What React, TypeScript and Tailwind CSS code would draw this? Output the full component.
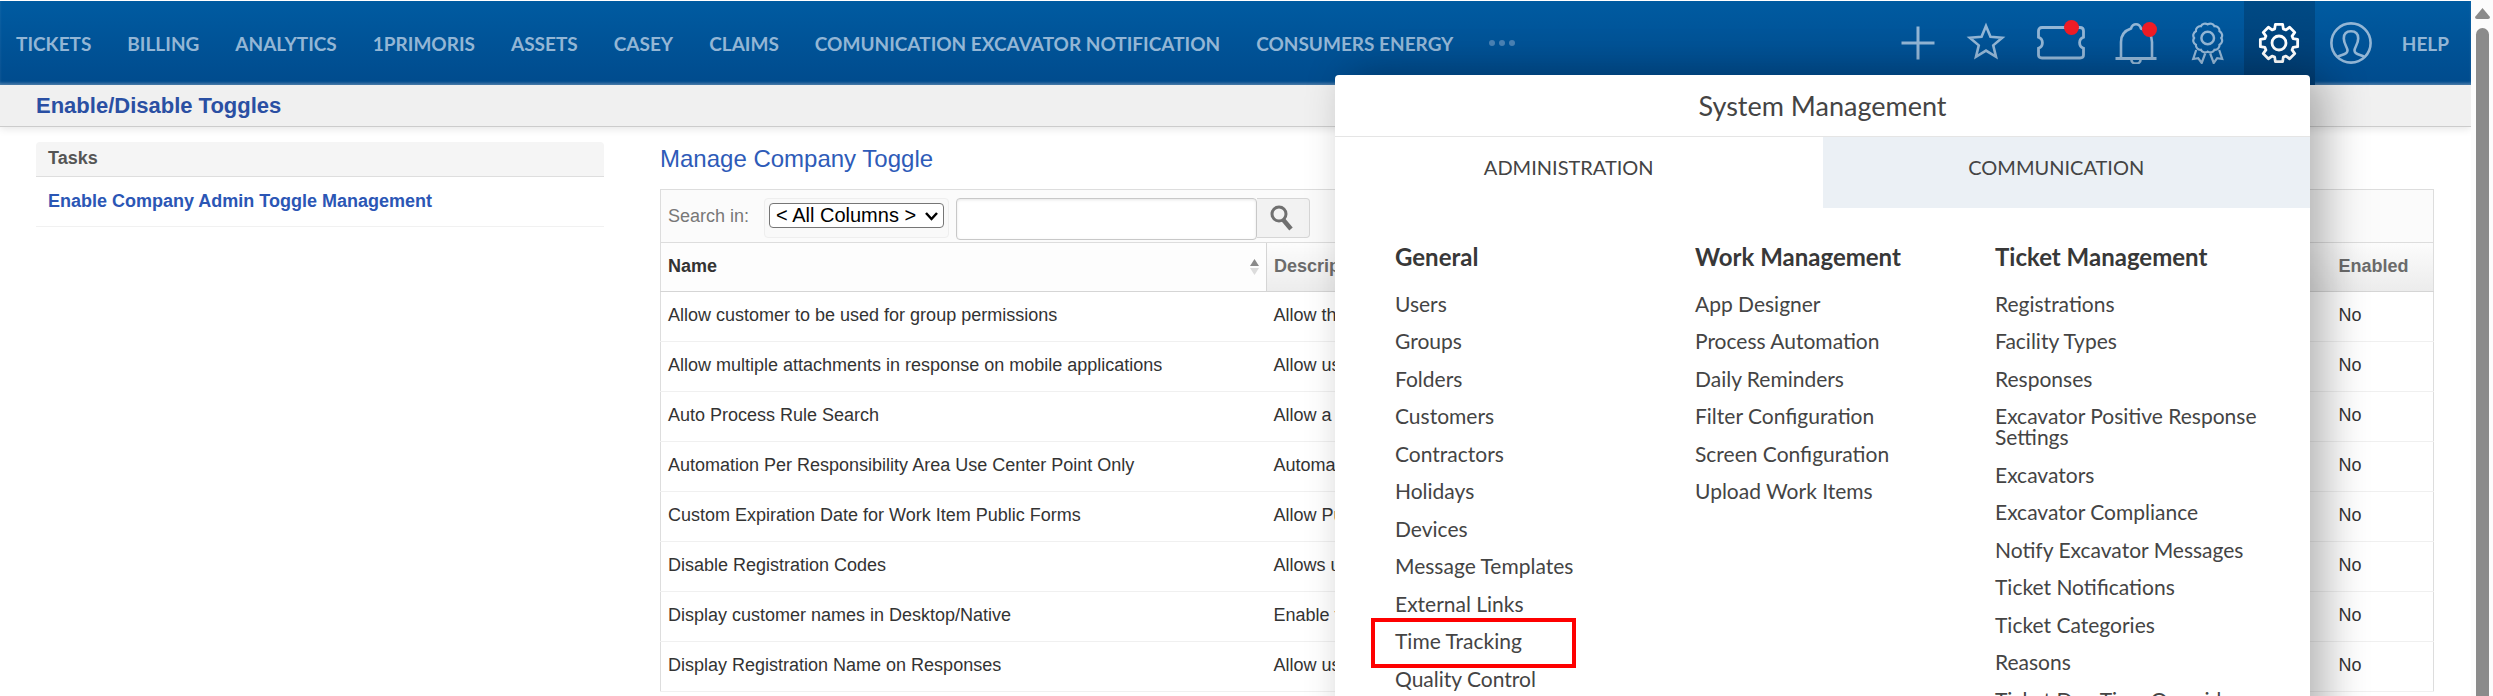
import { useState } from "react";

const navItems = [
  "TICKETS",
  "BILLING",
  "ANALYTICS",
  "1PRIMORIS",
  "ASSETS",
  "CASEY",
  "CLAIMS",
  "COMUNICATION EXCAVATOR NOTIFICATION",
  "CONSUMERS ENERGY",
];

const toggles = [
  { name: "Allow customer to be used for group permissions", description: "Allow the customer", enabled: false },
  { name: "Allow multiple attachments in response on mobile applications", description: "Allow users", enabled: false },
  { name: "Auto Process Rule Search", description: "Allow a rule", enabled: false },
  { name: "Automation Per Responsibility Area Use Center Point Only", description: "Automation", enabled: false },
  { name: "Custom Expiration Date for Work Item Public Forms", description: "Allow Public", enabled: false },
  { name: "Disable Registration Codes", description: "Allows users", enabled: false },
  { name: "Display customer names in Desktop/Native", description: "Enable the", enabled: false },
  { name: "Display Registration Name on Responses", description: "Allow users", enabled: false },
];

const menuColumns = [
  {
    title: "General",
    items: [
      "Users",
      "Groups",
      "Folders",
      "Customers",
      "Contractors",
      "Holidays",
      "Devices",
      "Message Templates",
      "External Links",
      "Time Tracking",
      "Quality Control",
    ],
  },
  {
    title: "Work Management",
    items: [
      "App Designer",
      "Process Automation",
      "Daily Reminders",
      "Filter Configuration",
      "Screen Configuration",
      "Upload Work Items",
    ],
  },
  {
    title: "Ticket Management",
    items: [
      "Registrations",
      "Facility Types",
      "Responses",
      "Excavator Positive Response Settings",
      "Excavators",
      "Excavator Compliance",
      "Notify Excavator Messages",
      "Ticket Notifications",
      "Ticket Categories",
      "Reasons",
      "Ticket Due Time Override",
    ],
  },
];

const HIGHLIGHTED_ITEM = "Time Tracking";

const polar = (c: number, r: number, deg: number) => {
  const a = ((deg - 90) * Math.PI) / 180;
  return `${(c + r * Math.cos(a)).toFixed(2)} ${(c + r * Math.sin(a)).toFixed(2)}`;
};

const starPath =
  "M" +
  Array.from({ length: 10 }, (_, i) => polar(21, i % 2 ? 7.6 : 17, i * 36)).join("L") +
  "Z";

const gearPath =
  "M" +
  Array.from({ length: 8 }, (_, i) => i * 45)
    .map((d) =>
      [
        polar(21, 14.8, d - 17),
        polar(21, 19, d - 11),
        polar(21, 19, d + 11),
        polar(21, 14.8, d + 17),
      ].join("L")
    )
    .join("L") +
  "Z";

const badgePath =
  `M${polar(16, 13.6, 0)}` +
  Array.from({ length: 12 }, (_, i) => `A4.6 4.6 0 0 1 ${polar(16, 13.6, (i + 1) * 30)}`).join("") +
  "Z";

function PlusIcon() {
  return (
    <svg width="34" height="34" viewBox="0 0 34 34" fill="none" stroke="currentColor" strokeWidth="3">
      <path d="M17 0.5V33.5M0.5 17H33.5" />
    </svg>
  );
}

function StarIcon() {
  return (
    <svg width="42" height="42" viewBox="0 0 42 42" fill="none" stroke="currentColor" strokeWidth="2.6" strokeMiterlimit="10">
      <path d={starPath} />
    </svg>
  );
}

function TicketIcon() {
  return (
    <svg width="48" height="34" viewBox="0 0 48 34" fill="none" stroke="currentColor" strokeWidth="2.8">
      <path d="M5 1.5H43Q46.5 1.5 46.5 5V11.2A5.9 5.9 0 0 0 46.5 22.3V29Q46.5 32 43 32H5Q1.5 32 1.5 29V22.3A5.9 5.9 0 0 0 1.5 11.2V5Q1.5 1.5 5 1.5Z" />
    </svg>
  );
}

function BellIcon() {
  return (
    <svg width="42" height="42" viewBox="0 0 42 42" fill="none" stroke="currentColor" strokeWidth="2.6">
      <path d="M6 35.5V20C6 13 10 8.5 16 6.5C17 3.5 19 2.3 21 2.3S25 3.5 26 6.5C32 8.5 37 13 37 20V35.5" />
      <path d="M0.5 36.5H41.5" strokeWidth="3" />
      <path d="M16.5 38A4.5 3.6 0 0 0 25.5 38" />
    </svg>
  );
}

function BadgeIcon() {
  return (
    <svg width="34" height="42" viewBox="-0.7 0 34 42" fill="none" stroke="currentColor" strokeWidth="2.2">
      <path d={badgePath} />
      <circle cx="16" cy="16" r="6.3" strokeWidth="2.5" />
      <path d="M4.5 28L1.5 37L6.5 36.2L10 41L13.5 31.5M27.5 28L30.5 37L25.5 36.2L22 41L18.5 31.5" />
    </svg>
  );
}

function GearIcon() {
  return (
    <svg width="42" height="42" viewBox="0 0 42 42" fill="none" stroke="currentColor" strokeWidth="2.8" strokeLinejoin="round">
      <path d={gearPath} />
      <circle cx="21" cy="21" r="7" />
    </svg>
  );
}

function UserIcon() {
  return (
    <svg width="42" height="42" viewBox="0 0 42 42" fill="none" stroke="currentColor" strokeWidth="2.6">
      <circle cx="21" cy="21" r="19.6" />
      <path d="M7.5 35C11 32.5 17.5 33 17.5 28.5C17.5 25.5 13.8 22 13.8 16.5C13.8 12 16.5 9.3 21 9.3S28.2 12 28.2 16.5C28.2 22 24.5 25.5 24.5 28.5C24.5 33 31 32.5 34.5 35" />
    </svg>
  );
}

function TopBar() {
  return (
    <header className="flex h-[84px] items-center bg-gradient-to-b from-[#005ba1] to-[#004b8d] shadow-[inset_0_-3px_3px_-1px_rgba(255,255,255,0.3)] font-['Lato',sans-serif] text-[#93b6d5]">
      <nav className="flex items-center gap-9 pl-4 text-[19px] font-bold whitespace-nowrap">
        {navItems.map((item) => (
          <a key={item} href="#">
            {item}
          </a>
        ))}
        <button type="button" aria-label="More" className="flex gap-1 text-[#4a82b4]">
          <span className="size-[6px] rounded-full bg-current" />
          <span className="size-[6px] rounded-full bg-current" />
          <span className="size-[6px] rounded-full bg-current" />
        </button>
      </nav>
      <div className="ml-auto flex h-full items-center pr-[22px]">
        <button type="button" aria-label="Add" className="mr-[30px]">
          <PlusIcon />
        </button>
        <button type="button" aria-label="Favorites" className="mr-[30px]">
          <StarIcon />
        </button>
        <button type="button" aria-label="Tickets" className="relative mr-[30px]">
          <TicketIcon />
          <span className="absolute -top-[6px] right-[6px] size-[15px] rounded-full bg-[#ee1c25]" />
        </button>
        <button type="button" aria-label="Alerts" className="relative mr-[34px]">
          <BellIcon />
          <span className="absolute top-0 right-0 size-[15px] rounded-full bg-[#ee1c25]" />
        </button>
        <button type="button" aria-label="Awards" className="mr-[19px]">
          <BadgeIcon />
        </button>
        <button
          type="button"
          aria-label="Settings"
          className="mr-[15px] flex h-full w-[71px] items-center justify-center bg-gradient-to-b from-[#004a85] to-[#003d74] text-white"
        >
          <GearIcon />
        </button>
        <button type="button" aria-label="Profile" className="mr-[30px]">
          <UserIcon />
        </button>
        <a href="#" className="text-[19px] font-bold">
          HELP
        </a>
      </div>
    </header>
  );
}

function SystemMenu() {
  const [tab, setTab] = useState("ADMINISTRATION");

  return (
    <section className="absolute top-[75px] right-[161px] z-10 h-full w-[975px] rounded bg-white font-['Lato',sans-serif] text-[#444] shadow-[15px_0_44px_rgba(0,0,0,0.3)]">
      <h2 className="border-b border-[#e5e5e5] py-4 text-center text-[27px] leading-[29px]">
        System Management
      </h2>
      <div className="grid grid-cols-2">
        {["ADMINISTRATION", "COMMUNICATION"].map((name) => (
          <button
            key={name}
            type="button"
            onClick={() => setTab(name)}
            className={`h-[71px] pr-5 pb-[10px] text-[20px] ${
              tab === name ? "bg-white" : "bg-[#ebf0f5]"
            }`}
          >
            {name}
          </button>
        ))}
      </div>
      <div className="grid grid-cols-[300px_300px_275px] px-[60px] pt-9">
        {menuColumns.map((column) => (
          <div key={column.title}>
            <h3 className="mb-[23px] text-[24px] leading-[26px] font-bold text-[#383838]">{column.title}</h3>
            <ul className="text-[21px] leading-[21px]">
              {column.items.map((item) => (
                <li key={item} className="relative odd:pb-4 even:pb-[17px]">
                  <a href="#">{item}</a>
                  {item === HIGHLIGHTED_ITEM && (
                    <span className="absolute -top-3 -left-6 h-[50px] w-[205px] border-4 border-[#fe0000]" />
                  )}
                </li>
              ))}
            </ul>
          </div>
        ))}
      </div>
    </section>
  );
}

function TaskList() {
  return (
    <aside className="w-[568px] shrink-0 pt-[15px]">
      <h2 className="rounded-t border-b border-[#dedede] bg-[#f5f5f5] px-3 pt-1 pb-[5px] leading-[25px] font-bold text-[#555]">
        Tasks
      </h2>
      <a
        href="#"
        className="block border-b border-[#f1f1f1] px-3 py-3 leading-[25px] font-bold text-[#2b56b5]"
      >
        Enable Company Admin Toggle Management
      </a>
    </aside>
  );
}

function SearchBar() {
  return (
    <form className="flex h-[54px] items-start border border-[#ddd] bg-[#fbfbfb] px-[7px] pt-2">
      <label htmlFor="column" className="pt-[6px] text-[#777]">
        Search in:
      </label>
      <div className="ml-[15px] h-10 w-[185px] rounded-sm border border-[#eee] bg-[#f9f9f9] pt-1 pl-1">
        <div className="relative w-[175px]">
          <select
            id="column"
            className="w-full appearance-none rounded border border-[#767676] bg-white px-[6px] text-[20px] leading-[23px] text-black"
          >
            <option>&lt; All Columns &gt;</option>
          </select>
          <svg
            width="13"
            height="9"
            viewBox="0 0 13 9"
            fill="none"
            stroke="#000"
            strokeWidth="2.5"
            className="pointer-events-none absolute top-[9px] right-[6px]"
          >
            <path d="M1 1L6.5 7L12 1" />
          </svg>
        </div>
      </div>
      <input
        type="text"
        aria-label="Search text"
        className="ml-[7px] h-[42px] w-[301px] rounded-sm border border-[#c8c8c8] bg-white px-2 shadow-[inset_0_1px_3px_rgba(0,0,0,0.1)]"
      />
      <button
        type="button"
        aria-label="Search"
        className="flex h-10 w-[53px] items-center justify-center rounded-r border border-l-0 border-[#d6d6d6] bg-[#f2f2f2] text-[#707070]"
      >
        <svg width="26" height="28" viewBox="0 0 26 28" fill="none" stroke="currentColor">
          <circle cx="9" cy="10" r="7" strokeWidth="3" />
          <path d="M13 15.5L21 25" strokeWidth="4.5" />
        </svg>
      </button>
    </form>
  );
}

function ToggleTable() {
  return (
    <table className="w-full table-fixed border-x border-[#ddd] text-left text-[#333]">
      <colgroup>
        <col className="w-[606px]" />
        <col />
        <col className="w-[102px]" />
      </colgroup>
      <thead>
        <tr className="h-[48px] border-b border-[#d5d5d5]">
          <th className="border-r border-[#d5d5d5] bg-[#fdfdfd] px-[7px]">
            <span className="flex items-center justify-between">
              Name
              <svg width="9" height="16" viewBox="0 0 9 16">
                <path d="M4.5 0L9 7H0Z" fill="#8a8a8a" />
                <path d="M4.5 16L9 9H0Z" fill="#dcdcdc" />
              </svg>
            </span>
          </th>
          <th className="bg-gradient-to-b from-[#fcfcfc] to-[#ececec] px-[7px] text-[#6b6b6b]">Description</th>
          <th className="bg-gradient-to-b from-[#fcfcfc] to-[#ececec] px-[7px] text-[#6b6b6b]">Enabled</th>
        </tr>
      </thead>
      <tbody>
        {toggles.map((toggle) => (
          <tr key={toggle.name} className="h-[50px] border-b border-[#f0f0f0]">
            <td className="px-[7px] pb-px">{toggle.name}</td>
            <td className="px-[7px] pb-px">{toggle.description}</td>
            <td className="px-[7px] pb-px">{toggle.enabled ? "Yes" : "No"}</td>
          </tr>
        ))}
      </tbody>
    </table>
  );
}

function Scrollbar() {
  return (
    <div className="flex w-[22px] shrink-0 flex-col items-center bg-[#fcfcfc] pt-2">
      <svg width="15" height="11" viewBox="0 0 15 11" fill="#8b8b8b">
        <path d="M7.5 0L15 9Q15 11 13 11H2Q0 11 0 9Z" />
      </svg>
      <div className="mt-[9px] w-[13px] flex-1 rounded-t-full bg-[#8b8b8b]" />
    </div>
  );
}

export default function App() {
  return (
    <div className="flex h-screen overflow-hidden bg-white font-['Liberation_Sans',Arial,sans-serif] text-[18px] leading-[25px]">
      <div className="relative min-w-0 flex-1 overflow-hidden pt-px">
        <TopBar />
        <h1 className="border-b border-[#ccc] bg-[#f0f0f0] px-9 py-2 text-[22px] leading-[25px] font-bold text-[#2a4fa3] shadow-[0_2px_8px_rgba(0,0,0,0.1)]">
          Enable/Disable Toggles
        </h1>
        <main className="flex gap-14 pr-[37px] pl-9">
          <TaskList />
          <div className="min-w-0 flex-1 pt-[17px]">
            <h2 className="mb-4 text-[24px] leading-[29px] text-[#2e5bb8]">Manage Company Toggle</h2>
            <SearchBar />
            <ToggleTable />
          </div>
        </main>
        <SystemMenu />
      </div>
      <Scrollbar />
    </div>
  );
}
